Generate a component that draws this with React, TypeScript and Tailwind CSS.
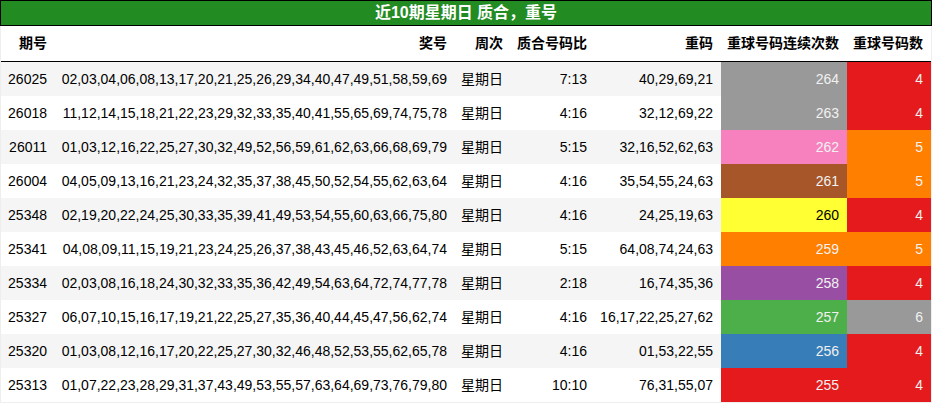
import React from "react";

type Row = {
  id: string;
  nums: string;
  week: string;
  ratio: string;
  rep: string;
  streak: number;
  streakBg: string;
  streakDark?: boolean;
  count: number;
  countBg: string;
};

const RED = "bg-[#e41a1c]";
const ORANGE = "bg-[#ff7f00]";
const GRAY = "bg-[#999999]";

const rows: Row[] = [
  { id: "26025", nums: "02,03,04,06,08,13,17,20,21,25,26,29,34,40,47,49,51,58,59,69", week: "星期日", ratio: "7:13", rep: "40,29,69,21", streak: 264, streakBg: "bg-[#999999]", count: 4, countBg: RED },
  { id: "26018", nums: "11,12,14,15,18,21,22,23,29,32,33,35,40,41,55,65,69,74,75,78", week: "星期日", ratio: "4:16", rep: "32,12,69,22", streak: 263, streakBg: "bg-[#999999]", count: 4, countBg: RED },
  { id: "26011", nums: "01,03,12,16,22,25,27,30,32,49,52,56,59,61,62,63,66,68,69,79", week: "星期日", ratio: "5:15", rep: "32,16,52,62,63", streak: 262, streakBg: "bg-[#f781bf]", count: 5, countBg: ORANGE },
  { id: "26004", nums: "04,05,09,13,16,21,23,24,32,35,37,38,45,50,52,54,55,62,63,64", week: "星期日", ratio: "4:16", rep: "35,54,55,24,63", streak: 261, streakBg: "bg-[#a65628]", count: 5, countBg: ORANGE },
  { id: "25348", nums: "02,19,20,22,24,25,30,33,35,39,41,49,53,54,55,60,63,66,75,80", week: "星期日", ratio: "4:16", rep: "24,25,19,63", streak: 260, streakBg: "bg-[#ffff33]", streakDark: true, count: 4, countBg: RED },
  { id: "25341", nums: "04,08,09,11,15,19,21,23,24,25,26,37,38,43,45,46,52,63,64,74", week: "星期日", ratio: "5:15", rep: "64,08,74,24,63", streak: 259, streakBg: "bg-[#ff7f00]", count: 5, countBg: ORANGE },
  { id: "25334", nums: "02,03,08,16,18,24,30,32,33,35,36,42,49,54,63,64,72,74,77,78", week: "星期日", ratio: "2:18", rep: "16,74,35,36", streak: 258, streakBg: "bg-[#984ea3]", count: 4, countBg: RED },
  { id: "25327", nums: "06,07,10,15,16,17,19,21,22,25,27,35,36,40,44,45,47,56,62,74", week: "星期日", ratio: "4:16", rep: "16,17,22,25,27,62", streak: 257, streakBg: "bg-[#4daf4a]", count: 6, countBg: GRAY },
  { id: "25320", nums: "01,03,08,12,16,17,20,22,25,27,30,32,46,48,52,53,55,62,65,78", week: "星期日", ratio: "4:16", rep: "01,53,22,55", streak: 256, streakBg: "bg-[#377eb8]", count: 4, countBg: RED },
  { id: "25313", nums: "01,07,22,23,28,29,31,37,43,49,53,55,57,63,64,69,73,76,79,80", week: "星期日", ratio: "10:10", rep: "76,31,55,07", streak: 255, streakBg: "bg-[#e41a1c]", count: 4, countBg: RED },
];

const headers = ["期号", "奖号", "周次", "质合号码比", "重码", "重球号码连续次数", "重球号码数"];

const grid = "grid grid-cols-[54px_400px_56px_84px_126px_126px_84px]";

export default function App() {
  return (
    <div
      className="w-[932px] h-[403px] bg-white text-black overflow-hidden"
      style={{ fontFamily: '"Liberation Sans", "Noto Sans CJK SC", sans-serif' }}
    >
      <div className="h-[26px] bg-[#228B22] border border-black flex items-center justify-center text-white font-bold text-[16px] leading-none">
        近10期星期日 质合，重号
      </div>
      <div className="border-x border-[#eeeeee]">
        <div className={`${grid} h-[36px] border-b border-black`}>
          {headers.map((h) => (
            <div key={h} className="flex items-center justify-end pr-2 font-bold text-[14px] whitespace-nowrap">
              {h}
            </div>
          ))}
        </div>
        {rows.map((r, i) => (
          <div key={r.id} className={`${grid} h-[34px] text-[14px] ${i % 2 === 0 ? "bg-[#f5f5f5]" : "bg-white"}`}>
            <div className="flex items-center justify-end pr-2">{r.id}</div>
            <div className="flex items-center justify-end pr-2 whitespace-nowrap">{r.nums}</div>
            <div className="flex items-center justify-end pr-2 whitespace-nowrap">{r.week}</div>
            <div className="flex items-center justify-end pr-2">{r.ratio}</div>
            <div className="flex items-center justify-end pr-2 whitespace-nowrap">{r.rep}</div>
            <div className={`flex items-center justify-end pr-2 ${r.streakBg} ${r.streakDark ? "text-black" : "text-[#f1f1f1]"}`}>
              {r.streak}
            </div>
            <div className={`flex items-center justify-end pr-2 ${r.countBg} text-[#f1f1f1]`}>{r.count}</div>
          </div>
        ))}
        <div className="h-px bg-[#eeeeee]" />
      </div>
    </div>
  );
}
